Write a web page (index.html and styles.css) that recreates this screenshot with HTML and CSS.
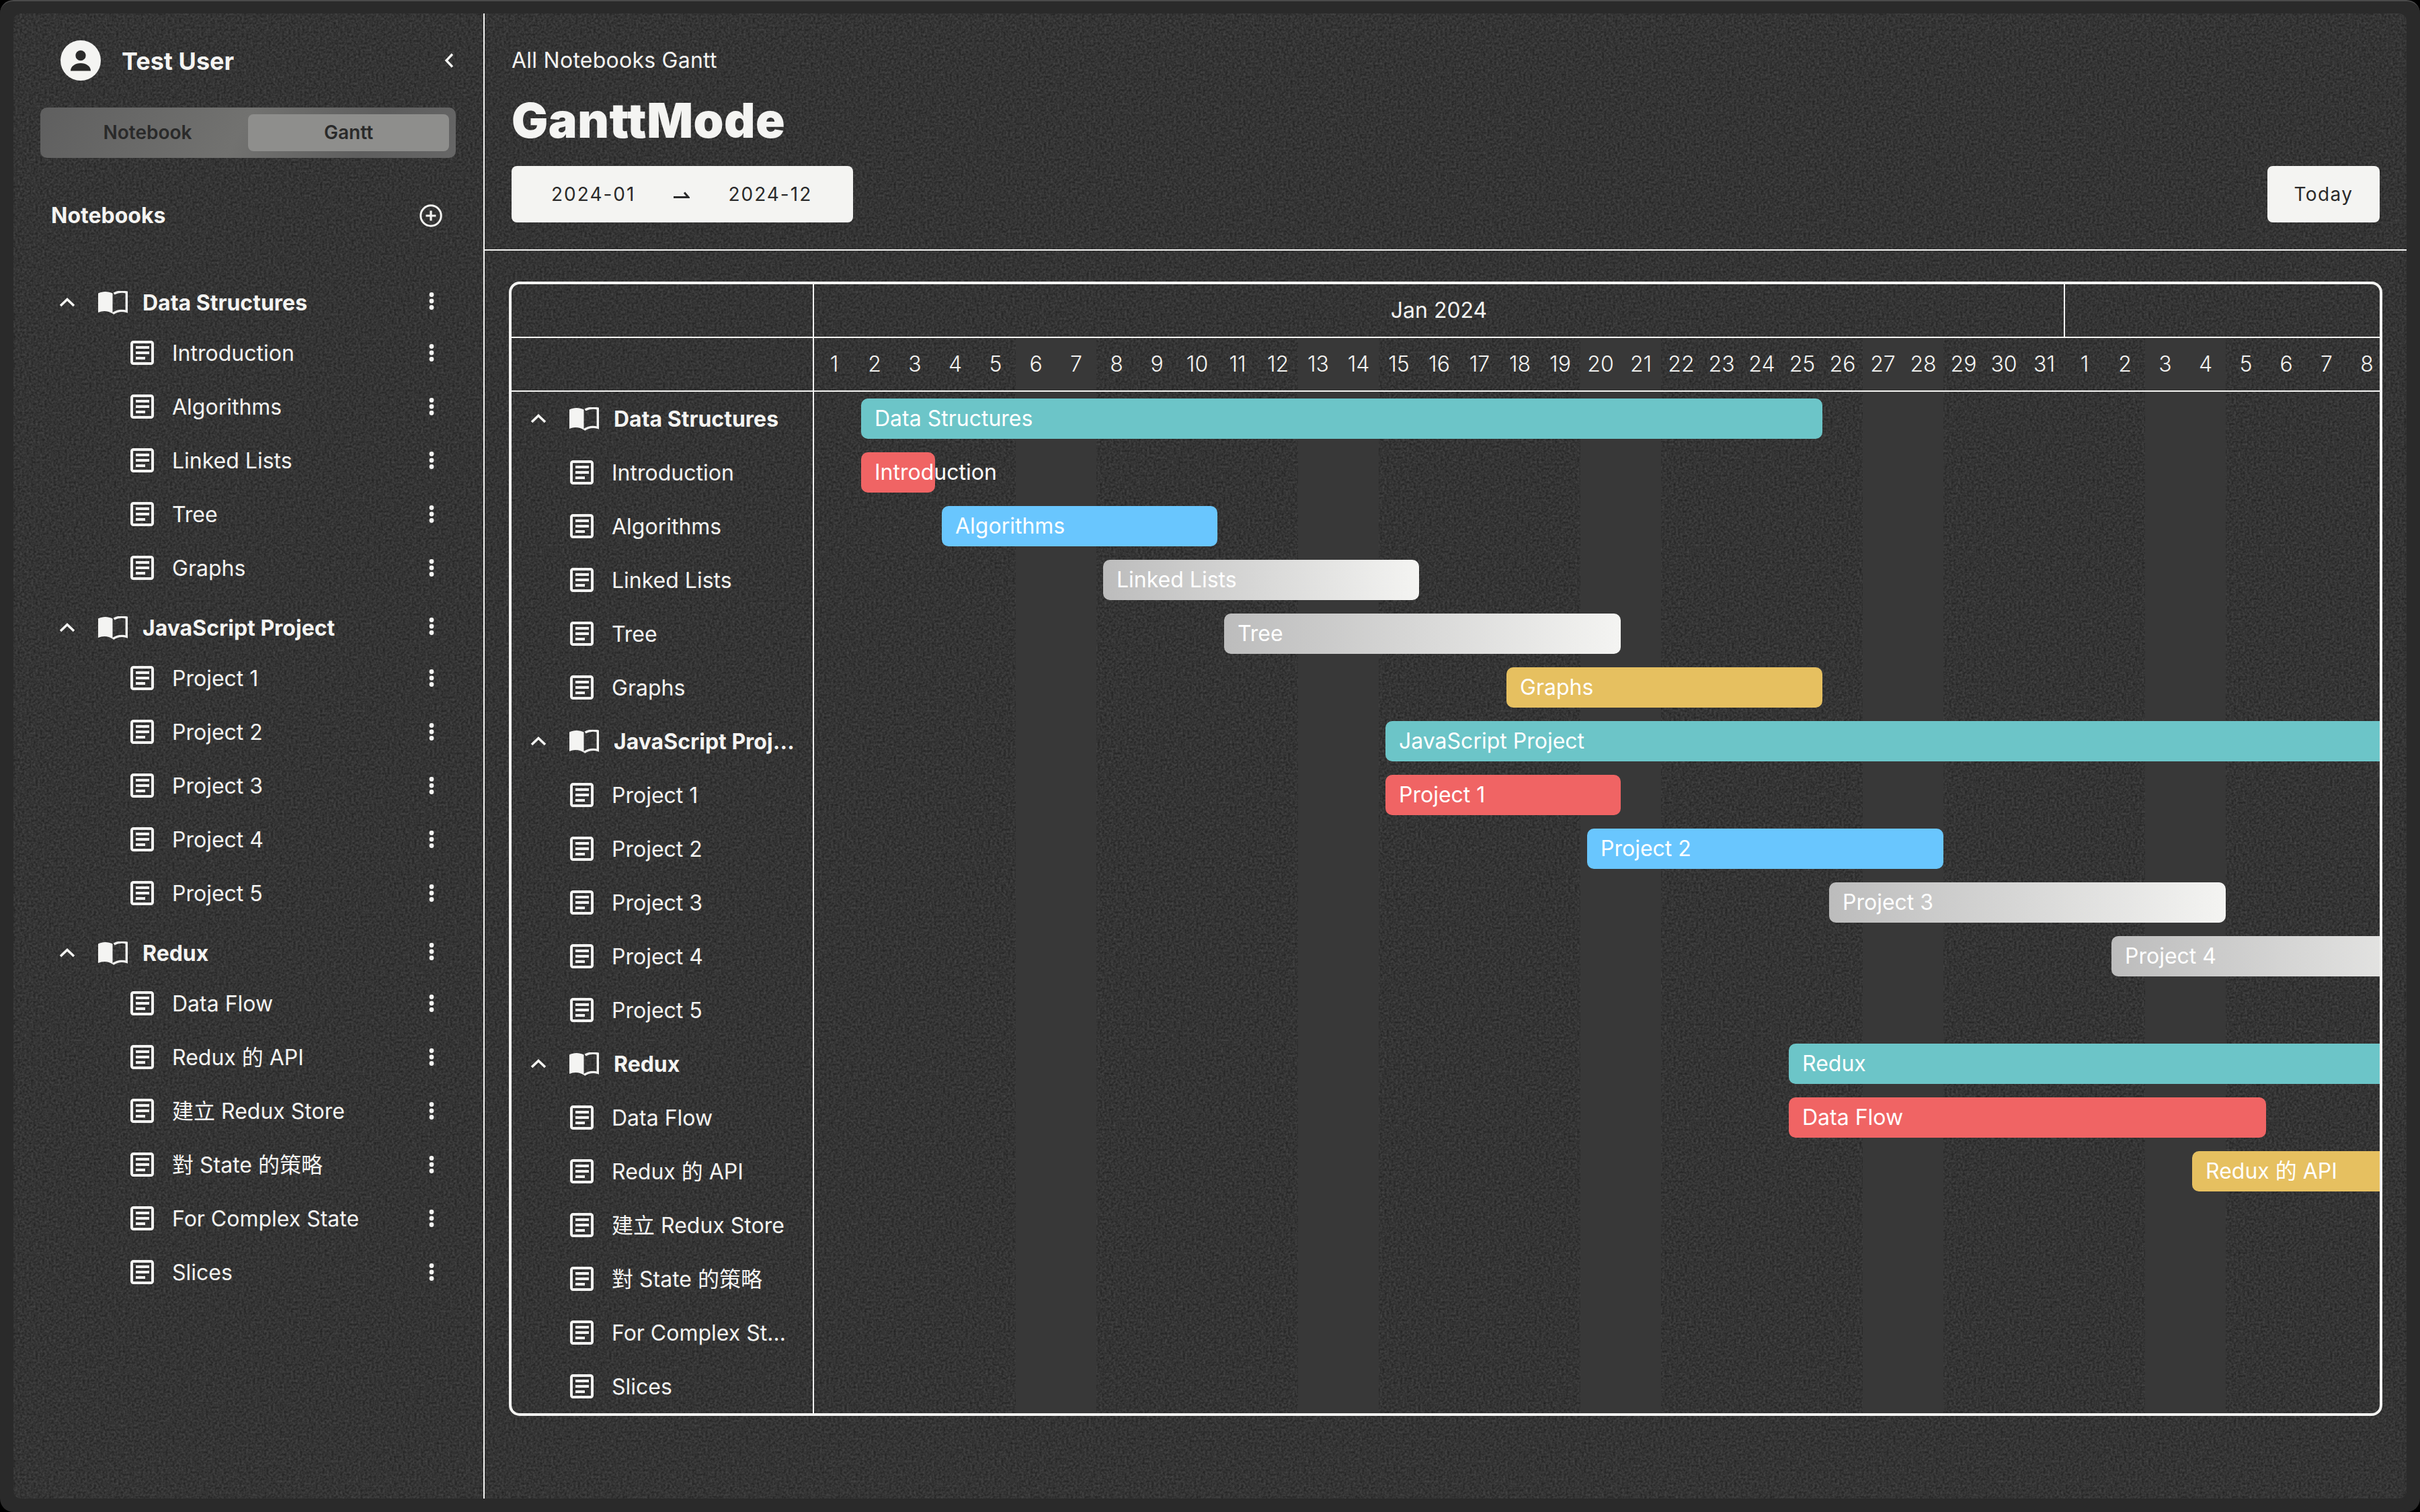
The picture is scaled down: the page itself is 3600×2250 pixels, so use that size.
FILE: index.html
```html
<!DOCTYPE html>
<html lang="en">
<head>
    <meta charset="UTF-8">
    <title>GanttMode</title>
    <link rel="stylesheet" href="styles.css">
</head>
<body>

    <!-- Shared icons -->
    <svg class="defs" width="0" height="0">
        <symbol id="ic-up" viewBox="0 0 24 14"><path d="M2 12L12 2.5L22 12" fill="none" stroke="currentColor" stroke-width="3.6"/></symbol>
        <symbol id="ic-book" viewBox="0 0 44 35"><path d="M0 3.5C6 0 15 0 21.5 3.5V31.5L22 34C15 29 7 29 0 32Z" fill="currentColor"/><path d="M23.5 4C29 1 36 .5 42.3 2V30.5C36 28.5 29 29 22 33.5" fill="none" stroke="currentColor" stroke-width="3.4"/></symbol>
        <symbol id="ic-doc" viewBox="0 0 35 36"><rect x="2" y="2" width="31" height="32" rx="2.5" fill="none" stroke="currentColor" stroke-width="4"/><path d="M8 8h20v4H8zM8 16h20v4H8zM8 24h14v4H8z" fill="currentColor"/></symbol>
        <symbol id="ic-more" viewBox="0 0 24 28"><circle cx="12" cy="4.5" r="3.4" fill="currentColor"/><circle cx="12" cy="14" r="3.4" fill="currentColor"/><circle cx="12" cy="23.5" r="3.4" fill="currentColor"/></symbol>
        <filter id="grain" x="0" y="0" width="100%" height="100%" color-interpolation-filters="sRGB">
            <feTurbulence type="fractalNoise" baseFrequency="0.3" numOctaves="2" seed="4"/>
            <feColorMatrix type="matrix" values="0.2 0 0 0 0.105  0.2 0 0 0 0.105  0.2 0 0 0 0.105  0 0 0 0 1"/>
        </filter>
    </svg>

    <div class="frame">
        <div class="panel">
            <svg class="grain" width="100%" height="100%"><rect width="100%" height="100%" filter="url(#grain)"/></svg>

            <!-- Sidebar -->
            <aside class="sidebar">
                <div class="profile">
                    <svg class="avatar" viewBox="0 0 60 60"><circle cx="30" cy="30" r="30" fill="#f4f4f2"/><circle cx="30" cy="22.7" r="7.6" fill="#2a2a2a"/><path d="M15 45.5C15 38.5 22 34 30 34C38 34 45 38.5 45 45.5Z" fill="#2a2a2a"/></svg>
                    <span class="profile-name">Test User</span>
                    <svg class="collapse" viewBox="0 0 14 22"><path d="M12 1.5L3 11L12 20.5" fill="none" stroke="currentColor" stroke-width="3.4"/></svg>
                </div>

                <div class="toggle">
                    <div class="toggle-btn">Notebook</div>
                    <div class="toggle-btn active">Gantt</div>
                </div>

                <div class="nb-head">
                    <span>Notebooks</span>
                    <svg class="add" viewBox="0 0 34 34"><circle cx="17" cy="17" r="15.2" fill="none" stroke="currentColor" stroke-width="3"/><path d="M17 9.5V24.5M9.5 17H24.5" fill="none" stroke="currentColor" stroke-width="3.2"/></svg>
                </div>

                <div class="tree">
                    <section class="tree-group">
                        <div class="tree-title"><svg class="ic-up"><use href="#ic-up"/></svg><svg class="ic-book"><use href="#ic-book"/></svg><span class="grow">Data Structures</span><svg class="ic-more"><use href="#ic-more"/></svg></div>
                        <div class="tree-item"><svg class="ic-doc"><use href="#ic-doc"/></svg><span class="grow">Introduction</span><svg class="ic-more"><use href="#ic-more"/></svg></div>
                        <div class="tree-item"><svg class="ic-doc"><use href="#ic-doc"/></svg><span class="grow">Algorithms</span><svg class="ic-more"><use href="#ic-more"/></svg></div>
                        <div class="tree-item"><svg class="ic-doc"><use href="#ic-doc"/></svg><span class="grow">Linked Lists</span><svg class="ic-more"><use href="#ic-more"/></svg></div>
                        <div class="tree-item"><svg class="ic-doc"><use href="#ic-doc"/></svg><span class="grow">Tree</span><svg class="ic-more"><use href="#ic-more"/></svg></div>
                        <div class="tree-item"><svg class="ic-doc"><use href="#ic-doc"/></svg><span class="grow">Graphs</span><svg class="ic-more"><use href="#ic-more"/></svg></div>
                    </section>
                    <section class="tree-group">
                        <div class="tree-title"><svg class="ic-up"><use href="#ic-up"/></svg><svg class="ic-book"><use href="#ic-book"/></svg><span class="grow">JavaScript Project</span><svg class="ic-more"><use href="#ic-more"/></svg></div>
                        <div class="tree-item"><svg class="ic-doc"><use href="#ic-doc"/></svg><span class="grow">Project 1</span><svg class="ic-more"><use href="#ic-more"/></svg></div>
                        <div class="tree-item"><svg class="ic-doc"><use href="#ic-doc"/></svg><span class="grow">Project 2</span><svg class="ic-more"><use href="#ic-more"/></svg></div>
                        <div class="tree-item"><svg class="ic-doc"><use href="#ic-doc"/></svg><span class="grow">Project 3</span><svg class="ic-more"><use href="#ic-more"/></svg></div>
                        <div class="tree-item"><svg class="ic-doc"><use href="#ic-doc"/></svg><span class="grow">Project 4</span><svg class="ic-more"><use href="#ic-more"/></svg></div>
                        <div class="tree-item"><svg class="ic-doc"><use href="#ic-doc"/></svg><span class="grow">Project 5</span><svg class="ic-more"><use href="#ic-more"/></svg></div>
                    </section>
                    <section class="tree-group">
                        <div class="tree-title"><svg class="ic-up"><use href="#ic-up"/></svg><svg class="ic-book"><use href="#ic-book"/></svg><span class="grow">Redux</span><svg class="ic-more"><use href="#ic-more"/></svg></div>
                        <div class="tree-item"><svg class="ic-doc"><use href="#ic-doc"/></svg><span class="grow">Data Flow</span><svg class="ic-more"><use href="#ic-more"/></svg></div>
                        <div class="tree-item"><svg class="ic-doc"><use href="#ic-doc"/></svg><span class="grow">Redux 的 API</span><svg class="ic-more"><use href="#ic-more"/></svg></div>
                        <div class="tree-item"><svg class="ic-doc"><use href="#ic-doc"/></svg><span class="grow">建立 Redux Store</span><svg class="ic-more"><use href="#ic-more"/></svg></div>
                        <div class="tree-item"><svg class="ic-doc"><use href="#ic-doc"/></svg><span class="grow">對 State 的策略</span><svg class="ic-more"><use href="#ic-more"/></svg></div>
                        <div class="tree-item"><svg class="ic-doc"><use href="#ic-doc"/></svg><span class="grow">For Complex State</span><svg class="ic-more"><use href="#ic-more"/></svg></div>
                        <div class="tree-item"><svg class="ic-doc"><use href="#ic-doc"/></svg><span class="grow">Slices</span><svg class="ic-more"><use href="#ic-more"/></svg></div>
                    </section>
                </div>
            </aside>

            <!-- Main -->
            <main class="main">
                <header class="page-head">
                    <div class="crumb">All Notebooks Gantt</div>
                    <h1 class="title">GanttMode</h1>
                    <div class="controls">
                        <div class="range">
                            <span>2024-01</span>
                            <svg class="range-arrow" viewBox="0 0 24 10"><path d="M0 8.5H22L16 1.5" fill="none" stroke="currentColor" stroke-width="3"/></svg>
                            <span>2024-12</span>
                        </div>
                        <button class="today">Today</button>
                    </div>
                </header>

                <div class="gantt">
                    <div class="gantt-labels">
                        <div class="label-head"></div>
                        <div class="label-head"></div>
                        <div class="label-title"><svg class="ic-up"><use href="#ic-up"/></svg><svg class="ic-book"><use href="#ic-book"/></svg><span class="label-text">Data Structures</span></div>
                        <div class="label-item"><svg class="ic-doc"><use href="#ic-doc"/></svg><span class="label-text">Introduction</span></div>
                        <div class="label-item"><svg class="ic-doc"><use href="#ic-doc"/></svg><span class="label-text">Algorithms</span></div>
                        <div class="label-item"><svg class="ic-doc"><use href="#ic-doc"/></svg><span class="label-text">Linked Lists</span></div>
                        <div class="label-item"><svg class="ic-doc"><use href="#ic-doc"/></svg><span class="label-text">Tree</span></div>
                        <div class="label-item"><svg class="ic-doc"><use href="#ic-doc"/></svg><span class="label-text">Graphs</span></div>
                        <div class="label-title"><svg class="ic-up"><use href="#ic-up"/></svg><svg class="ic-book"><use href="#ic-book"/></svg><span class="label-text">JavaScript Project</span></div>
                        <div class="label-item"><svg class="ic-doc"><use href="#ic-doc"/></svg><span class="label-text">Project 1</span></div>
                        <div class="label-item"><svg class="ic-doc"><use href="#ic-doc"/></svg><span class="label-text">Project 2</span></div>
                        <div class="label-item"><svg class="ic-doc"><use href="#ic-doc"/></svg><span class="label-text">Project 3</span></div>
                        <div class="label-item"><svg class="ic-doc"><use href="#ic-doc"/></svg><span class="label-text">Project 4</span></div>
                        <div class="label-item"><svg class="ic-doc"><use href="#ic-doc"/></svg><span class="label-text">Project 5</span></div>
                        <div class="label-title"><svg class="ic-up"><use href="#ic-up"/></svg><svg class="ic-book"><use href="#ic-book"/></svg><span class="label-text">Redux</span></div>
                        <div class="label-item"><svg class="ic-doc"><use href="#ic-doc"/></svg><span class="label-text">Data Flow</span></div>
                        <div class="label-item"><svg class="ic-doc"><use href="#ic-doc"/></svg><span class="label-text">Redux 的 API</span></div>
                        <div class="label-item"><svg class="ic-doc"><use href="#ic-doc"/></svg><span class="label-text">建立 Redux Store</span></div>
                        <div class="label-item"><svg class="ic-doc"><use href="#ic-doc"/></svg><span class="label-text">對 State 的策略</span></div>
                        <div class="label-item"><svg class="ic-doc"><use href="#ic-doc"/></svg><span class="label-text">For Complex State</span></div>
                        <div class="label-item"><svg class="ic-doc"><use href="#ic-doc"/></svg><span class="label-text">Slices</span></div>
                    </div>

                    <div class="gantt-chart">
                        <div class="months">
                            <div class="month">Jan 2024</div>
                            <div class="month month-next"></div>
                        </div>
                        <div class="days weeks">
                            <span>1</span><span>2</span><span>3</span><span>4</span><span>5</span><span>6</span><span>7</span><span>8</span><span>9</span><span>10</span>
                            <span>11</span><span>12</span><span>13</span><span>14</span><span>15</span><span>16</span><span>17</span><span>18</span><span>19</span><span>20</span>
                            <span>21</span><span>22</span><span>23</span><span>24</span><span>25</span><span>26</span><span>27</span><span>28</span><span>29</span><span>30</span><span>31</span>
                            <span>1</span><span>2</span><span>3</span><span>4</span><span>5</span><span>6</span><span>7</span><span>8</span>
                        </div>
                        <div class="lanes weeks">
                            <div class="lane"><div class="bar teal" style="margin-left:70px;width:1430px">Data Structures</div></div>
                            <div class="lane"><div class="bar red" style="margin-left:70px;width:110px">Introduction</div></div>
                            <div class="lane"><div class="bar blue" style="margin-left:190px;width:410px">Algorithms</div></div>
                            <div class="lane"><div class="bar fade" style="margin-left:430px;width:470px">Linked Lists</div></div>
                            <div class="lane"><div class="bar fade" style="margin-left:610px;width:590px">Tree</div></div>
                            <div class="lane"><div class="bar yellow" style="margin-left:1030px;width:470px">Graphs</div></div>
                            <div class="lane"><div class="bar teal" style="margin-left:850px;width:1600px">JavaScript Project</div></div>
                            <div class="lane"><div class="bar red" style="margin-left:850px;width:350px">Project 1</div></div>
                            <div class="lane"><div class="bar blue" style="margin-left:1150px;width:530px">Project 2</div></div>
                            <div class="lane"><div class="bar fade" style="margin-left:1510px;width:590px">Project 3</div></div>
                            <div class="lane"><div class="bar fade" style="margin-left:1930px;width:590px">Project 4</div></div>
                            <div class="lane"></div>
                            <div class="lane"><div class="bar teal" style="margin-left:1450px;width:1000px">Redux</div></div>
                            <div class="lane"><div class="bar red" style="margin-left:1450px;width:710px">Data Flow</div></div>
                            <div class="lane"><div class="bar yellow" style="margin-left:2050px;width:500px">Redux 的 API</div></div>
                            <div class="lane"></div>
                            <div class="lane"></div>
                            <div class="lane"></div>
                            <div class="lane"></div>
                        </div>
                    </div>
                </div>
            </main>
        </div>
    </div>

</body>
</html>
```

FILE: styles.css
```css
/* Reset */
* {
    box-sizing: border-box;
}

body {
    margin: 0;
    background: #000;
    color: #f4f4f2;
    font-family: Inter, "Noto Sans CJK TC", sans-serif;
    font-size: 32px;
    line-height: 1.2;
}

.defs {
    display: block;
    position: absolute;
}

/* Window frame */
.frame {
    height: 2250px;
    padding: 18px 20px 20px;
    background: #2a2a2a;
    border-top: 2px solid #4a4a4a;
    border-radius: 20px;
}

.panel {
    position: relative;
    display: flex;
    height: 100%;
    background: #333;
    border-radius: 12px;
    overflow: hidden;
}

.grain {
    position: absolute;
    top: 0;
    left: 0;
}

/* Sidebar */
.sidebar {
    position: relative;
    flex: 0 0 701px;
    padding: 40px 41px 0 40px;
    border-right: 2px solid #f4f4f2;
}

.profile {
    display: flex;
    align-items: center;
    height: 60px;
    padding-left: 30px;
}

.avatar {
    width: 60px;
    height: 60px;
}

.profile-name {
    flex: 1;
    margin-left: 31px;
    padding-top: 3px;
    font-size: 36px;
    font-weight: 700;
}

.collapse {
    width: 14px;
    height: 22px;
    margin-right: 3px;
}

.toggle {
    display: grid;
    grid-template-columns: 1fr 1fr;
    height: 75px;
    margin-top: 40px;
    padding: 10px;
    border-radius: 10px;
    background: linear-gradient(120deg, #5f5f5f, #727270 48%, #5e5e5e 78%, #666);
}

.toggle-btn {
    display: flex;
    align-items: center;
    justify-content: center;
    border-radius: 8px;
    color: #2a2a2a;
    font-size: 28px;
    font-weight: 600;
}

.toggle-btn.active {
    background: #8e8e8c;
}

.nb-head {
    display: flex;
    align-items: center;
    justify-content: space-between;
    height: 60px;
    margin-top: 56px;
    padding: 0 20px 0 16px;
    font-weight: 700;
}

.add {
    width: 34px;
    height: 34px;
}

.tree {
    margin-top: 64px;
}

.tree-group {
    margin-bottom: 14px;
}

.tree-title {
    display: flex;
    align-items: center;
    height: 70px;
    padding: 0 24px 0 28px;
    font-weight: 700;
}

.tree-title .ic-more {
    margin-bottom: 4px;
}

.tree-item {
    display: flex;
    align-items: center;
    height: 80px;
    padding: 0 24px 0 134px;
    font-weight: 400;
}

.grow {
    flex: 1;
    padding-top: 2px;
}

.ic-up {
    flex: none;
    width: 24px;
    height: 14px;
    margin-right: 34px;
}

.ic-book {
    flex: none;
    width: 44px;
    height: 35px;
    margin-right: 22px;
}

.ic-doc {
    flex: none;
    width: 35px;
    height: 36px;
    margin-right: 27px;
}

.ic-more {
    flex: none;
    width: 24px;
    height: 28px;
}

/* Main */
.main {
    position: relative;
    flex: 1;
    min-width: 0;
}

.page-head {
    height: 353px;
    padding: 40px 40px 0;
    border-bottom: 2px solid #f4f4f2;
}

.crumb {
    height: 60px;
    line-height: 60px;
    letter-spacing: 0.25px;
}

.title {
    margin: 20px 0 0;
    height: 78px;
    line-height: 78px;
    font-size: 72px;
    font-weight: 900;
    letter-spacing: 0.5px;
}

.controls {
    display: flex;
    justify-content: space-between;
    margin-top: 29px;
}

.range, .today {
    height: 84px;
    border-radius: 8px;
    background: #f4f4f2;
    color: #2a2a2a;
    font-family: inherit;
    font-size: 28px;
    letter-spacing: 2px;
}

.range {
    display: flex;
    align-items: center;
    gap: 57px;
    padding: 2px 61px 0 59px;
}

.range-arrow {
    width: 24px;
    height: 10px;
}

.today {
    width: 167px;
    padding: 0;
    border: none;
    letter-spacing: 1.4px;
}

/* Gantt */
.gantt {
    display: flex;
    height: 1688px;
    margin: 46px 36px 0;
    border: 4px solid #f4f4f2;
    border-radius: 16px;
    overflow: hidden;
}

.gantt-labels {
    flex: 0 0 450px;
    min-width: 0;
    border-right: 2px solid #f4f4f2;
}

.label-head {
    height: 80px;
    border-bottom: 2px solid #f4f4f2;
}

.label-title, .label-item {
    display: flex;
    align-items: center;
    height: 80px;
    padding-right: 26px;
}

.label-title {
    padding-left: 28px;
    font-weight: 700;
}

.label-item {
    padding-left: 87px;
}

.label-text {
    min-width: 0;
    padding-top: 2px;
    white-space: nowrap;
    overflow: hidden;
    text-overflow: ellipsis;
}

.gantt-chart {
    flex: 1;
    min-width: 0;
    overflow: hidden;
}

.months {
    display: flex;
    height: 80px;
    border-bottom: 2px solid #f4f4f2;
}

.month {
    flex: 0 0 1861px;
    line-height: 78px;
    text-align: center;
    border-right: 2px solid #f4f4f2;
}

.month-next {
    flex: 1;
    border-right: none;
}

/* Sat/Sun stripes, first one starts on Jan 6 */
.weeks {
    background-image: repeating-linear-gradient(90deg, transparent 0, transparent 300px, #383838 300px, #383838 420px);
}

.days {
    display: flex;
    width: 2340px;
    height: 80px;
    border-bottom: 2px solid #f4f4f2;
}

.days span {
    flex: 0 0 60px;
    line-height: 78px;
    text-align: center;
    font-weight: 350;
}

.lanes {
    width: 2340px;
}

.lane {
    height: 80px;
    padding: 10px 0;
}

.bar {
    height: 60px;
    padding-left: 20px;
    border-radius: 10px;
    line-height: 60px;
    color: #fff;
    font-weight: 400;
    white-space: nowrap;
}

.teal {
    background: #6cc5c8;
}

.red {
    background: #f06464;
}

.blue {
    background: #69c6fe;
}

.yellow {
    background: #e6c060;
}

.fade {
    background: linear-gradient(90deg, #bcbcbc, #f4f4f2);
}
```
